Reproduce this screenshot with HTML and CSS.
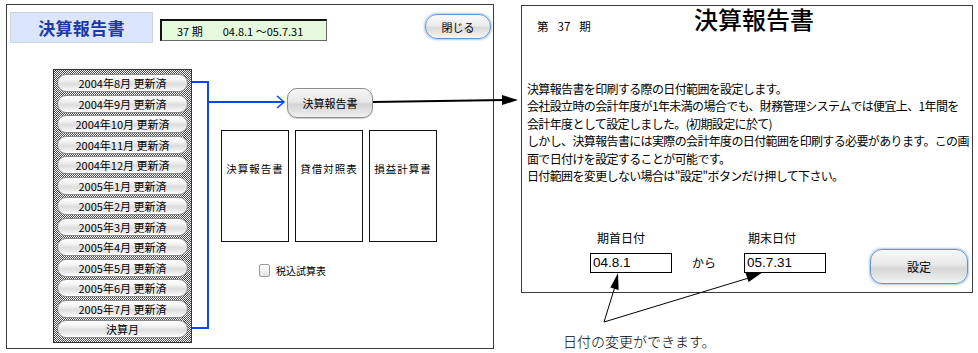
FILE: index.html
```html
<!DOCTYPE html>
<html lang="ja">
<head>
<meta charset="utf-8">
<title>決算報告書</title>
<link rel="stylesheet" href="styles.css">
</head>
<body>
<div class="page">
  <section class="main-panel">
    <header class="main-head">
      <div class="title-box">決算報告書</div>
      <div class="period-box"><span>37 期</span><span>04.8.1 ～05.7.31</span></div>
      <div class="close-btn">閉じる</div>
    </header>
    <div class="main-body">
      <div class="months">
        <div class="month-btn">2004年8月 更新済</div>
        <div class="month-btn">2004年9月 更新済</div>
        <div class="month-btn">2004年10月 更新済</div>
        <div class="month-btn">2004年11月 更新済</div>
        <div class="month-btn">2004年12月 更新済</div>
        <div class="month-btn">2005年1月 更新済</div>
        <div class="month-btn">2005年2月 更新済</div>
        <div class="month-btn">2005年3月 更新済</div>
        <div class="month-btn">2005年4月 更新済</div>
        <div class="month-btn">2005年5月 更新済</div>
        <div class="month-btn">2005年6月 更新済</div>
        <div class="month-btn">2005年7月 更新済</div>
        <div class="month-btn">決算月</div>
      </div>
      <div class="reports">
        <div class="report-btn">決算報告書</div>
        <div class="boxes">
          <div class="box">決算報告書</div>
          <div class="box">貸借対照表</div>
          <div class="box">損益計算書</div>
        </div>
        <div class="tax"><span class="check"></span><span>税込試算表</span></div>
      </div>
    </div>
  </section>
  <div class="side">
    <section class="report-panel">
      <header class="rp-head">
        <div class="rp-period"><span>第</span><span>37</span><span>期</span></div>
        <h1 class="rp-title">決算報告書</h1>
      </header>
      <p class="rp-text">決算報告書を印刷する際の日付範囲を設定します。<br>会社設立時の会計年度が1年未満の場合でも、財務管理システムでは便宜上、1年間を<br>会計年度として設定しました。(初期設定に於て)<br>しかし、決算報告書には実際の会計年度の日付範囲を印刷する必要があります。この画<br>面で日付けを設定することが可能です。<br>日付範囲を変更しない場合は"設定"ボタンだけ押して下さい。</p>
      <div class="dates">
        <div class="lbl lbl1">期首日付</div>
        <div class="lbl lbl2">期末日付</div>
        <div class="date-input in1">04.8.1</div>
        <div class="from">から</div>
        <div class="date-input in2">05.7.31</div>
        <div class="set-btn">設定</div>
      </div>
    </section>
    <p class="note">日付の変更ができます。</p>
  </div>
</div>
<svg class="overlay" width="978" height="353" viewBox="0 0 978 353">
  <path d="M192 82 H208 V328 H192" fill="none" stroke="#0d44ff" stroke-width="2"/>
  <path d="M208 102 H284" fill="none" stroke="#0d44ff" stroke-width="2"/>
  <path d="M277 96 L284 102 L277 108" fill="none" stroke="#0d44ff" stroke-width="1.6"/>
  <path d="M373 102 L505 100" fill="none" stroke="#000" stroke-width="2"/>
  <polygon points="502,95 518,100 502,105" fill="#000"/>
  <path d="M604 322 L617 280" fill="none" stroke="#000" stroke-width="1"/>
  <polygon points="618,273 618.6,290 610.4,287.6" fill="#000"/>
  <path d="M604 322 L752 277" fill="none" stroke="#000" stroke-width="1"/>
  <polygon points="763,272 748.6,282 745.4,272.6" fill="#000"/>
</svg>
</body>
</html>
```
FILE: styles.css
```css
* { box-sizing: border-box; margin: 0; padding: 0; }
html, body { width: 978px; height: 353px; overflow: hidden; background: #fff; }
body {
  position: relative;
  font-family: "Noto Sans CJK JP", "Liberation Sans", sans-serif;
  color: #000;
}
.page { display: flex; align-items: flex-start; padding: 4px 0 0 6px; }

/* ---------- left panel ---------- */
.main-panel {
  width: 488px; height: 345px;
  border: 1px solid #3c3c3c;
  display: flex; flex-direction: column;
}
.main-head { height: 38px; display: flex; align-items: flex-start; padding-left: 3px; }
.title-box {
  margin-top: 7px; width: 143px; height: 31px;
  background: #dbe5fb; border: 1px solid #cdd3df;
  display: flex; align-items: center; justify-content: center;
  font-size: 17px; font-weight: 700; color: #1d3aa6; letter-spacing: 0.3px;
}
.period-box {
  margin-top: 14px; margin-left: 7px; width: 167px; height: 22px;
  background: #e5fadd;
  border-top: 2px solid #111; border-left: 2px solid #111;
  border-right: 1px solid #666; border-bottom: 1px solid #666;
  display: flex; align-items: center; gap: 20px; padding-left: 15px;
  font-size: 11px; line-height: 14px;
}
.close-btn {
  margin: 9px 2px 0 auto; width: 66px; height: 25px;
  border-radius: 12px; border: 1.5px solid #5f95cf;
  box-shadow: 0 0 2px 1px rgba(110,160,220,.55);
  background: linear-gradient(#fafafa, #ececec 45%, #dadada 55%, #ececec 85%, #f7f7f7);
  display: flex; align-items: center; justify-content: center;
  font-size: 11px;
}
.main-body { margin-top: 26px; display: flex; align-items: flex-start; padding-left: 46px; }
.months {
  width: 139px; height: 274px;
  border: 1px solid #333;
  background: repeating-conic-gradient(#4a4a4a 0 25%, #ffffff 0 50%) 0 0 / 2px 2px;
  padding: 4px 3px;
  display: flex; flex-direction: column; gap: 2.5px;
}
.month-btn {
  height: 18px; flex: none;
  border-radius: 9px; border: 1px solid #8a8a8a;
  background: linear-gradient(#ffffff, #f4f4f4 30%, #dddddd 55%, #ededed 80%, #ffffff);
  font-size: 11px; line-height: 16px; text-align: center;
}
.reports { margin-left: 29px; padding-top: 19px; }
.report-btn {
  margin-left: 66px; width: 86px; height: 30px;
  border-radius: 10px; border: 1px solid #8d8d8d;
  background: linear-gradient(#f6f6f6, #e8e8e8 45%, #d4d4d4 55%, #e6e6e6 85%, #f2f2f2);
  box-shadow: 0 1px 1px rgba(0,0,0,.2);
  display: flex; align-items: center; justify-content: center;
  font-size: 11px;
}
.boxes { margin-top: 12px; display: flex; gap: 6px; }
.box {
  width: 68px; height: 112px; border: 1px solid #111;
  padding-top: 31px; text-align: center;
  font-size: 10.5px; letter-spacing: 1px; line-height: 14px;
}
.tax { margin: 22px 0 0 38px; display: flex; align-items: center; gap: 6px; font-size: 10px; line-height: 13px; }
.check {
  width: 11px; height: 13px; border: 1px solid #9a9a9a; border-radius: 2px;
  background: linear-gradient(#fff, #e4e4e4);
}

/* ---------- right panel ---------- */
.side { margin-left: 27px; margin-top: 1px; display: flex; flex-direction: column; }
.report-panel {
  width: 452px; height: 288px;
  border: 1px solid #3c3c3c;
  padding-left: 5px;
}
.rp-head { display: flex; align-items: baseline; padding-left: 10px; }
.rp-period { width: 157px; display: flex; gap: 9px; font-size: 11.5px; position: relative; top: 2px; }
.rp-title { font-size: 24px; font-weight: 500; line-height: 26px; letter-spacing: 0; }
.rp-text {
  margin-top: 48px;
  font-size: 12px; line-height: 17.4px; letter-spacing: -0.64px;
  white-space: nowrap;
}
.dates {
  margin-top: 47px; margin-left: 63px;
  display: grid;
  grid-template-columns: 82px 72px 82px auto;
  grid-template-rows: 20px 20px;
  row-gap: 2px;
  font-size: 12px;
}
.lbl { line-height: 14px; align-self: start; }
.lbl1 { grid-column: 1; grid-row: 1; margin-left: 7px; }
.lbl2 { grid-column: 3; grid-row: 1; margin-left: 4px; }
.date-input {
  grid-row: 2;
  border: 1px solid #000; height: 20px; background: #fff;
  font-family: "Liberation Sans", sans-serif; font-size: 13.5px; line-height: 18px;
  padding-left: 2px;
}
.in1 { grid-column: 1; }
.in2 { grid-column: 3; }
.from { grid-column: 2; grid-row: 2; padding-left: 20px; line-height: 20px; }
.set-btn {
  grid-column: 4; grid-row: 2;
  margin-left: 44px; margin-top: -4px;
  width: 98px; height: 35px;
  border-radius: 12px; border: 1.5px solid #5f95cf;
  box-shadow: 0 0 2px 1px rgba(110,160,220,.55);
  background: linear-gradient(#f8f8f8, #e8e8e8 45%, #d6d6d6 55%, #e8e8e8 85%, #f4f4f4);
  display: flex; align-items: center; justify-content: center;
  font-size: 12px;
}
.note {
  margin-top: 40px; margin-left: 42px;
  font-size: 14px; line-height: 16px; font-weight: 300;
}

.overlay { position: absolute; left: 0; top: 0; pointer-events: none; }
```
